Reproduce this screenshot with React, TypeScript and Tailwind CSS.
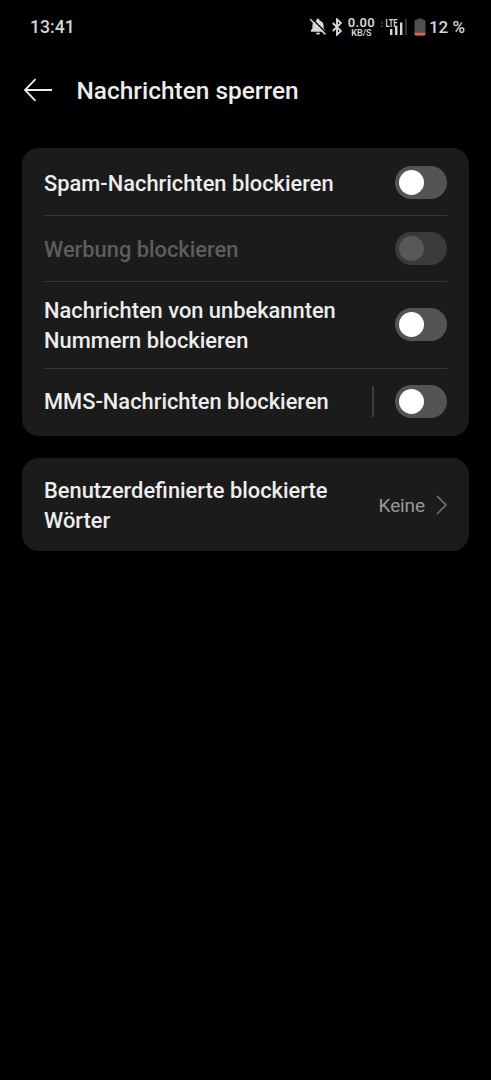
import { clsx } from 'clsx';

interface ToggleProps {
  label: string;
  disabled?: boolean;
}

function Toggle({ label, disabled = false }: ToggleProps) {
  return (
    <button
      role="switch"
      aria-checked={false}
      aria-label={label}
      disabled={disabled}
      className={clsx(
        'flex h-[33px] w-[52px] shrink-0 items-center rounded-full pl-[4px]',
        disabled ? 'bg-[#3b3b3b]' : 'bg-[#545454]'
      )}
    >
      <span className={clsx('size-[25px] rounded-full', disabled ? 'bg-[#585858]' : 'bg-white')} />
    </button>
  );
}

interface Setting {
  label: string;
  height: string;
  labelPadding: string;
  disabled?: boolean;
  hasDetails?: boolean;
}

const settings: Setting[] = [
  { label: 'Spam-Nachrichten blockieren', height: 'h-[66px]', labelPadding: 'pt-[3px]' },
  { label: 'Werbung blockieren', height: 'h-[66px]', labelPadding: 'pt-[2px]', disabled: true },
  {
    label: 'Nachrichten von unbekannten Nummern blockieren',
    height: 'h-[87px] pb-px',
    labelPadding: 'pt-[3px]',
  },
  { label: 'MMS-Nachrichten blockieren', height: 'h-[65px]', labelPadding: 'pt-px', hasDetails: true },
];

function StatusBar() {
  return (
    <div className="flex h-[54px] items-center justify-between pr-[26px] pl-[30px] text-[#d6d6d6]">
      <span className="text-[17.6px] leading-[22px] font-medium">13:41</span>
      <div className="flex items-center">
        {/* muted bell */}
        <svg width="18" height="18" viewBox="0 0 18 18" fill="none">
          <path
            d="M2 13.8V12L3.4 10.6V7.6C3.4 5 5 3.2 7.5 2.6V2a1.5 1.5 0 0 1 3 0v.6c2.5.6 4.1 2.4 4.1 5v3L16 12V13.8ZM7 14.8h4a2 2 0 0 1-4 0Z"
            fill="currentColor"
          />
          <path d="M2.4 .2L17.8 15.6" stroke="#000" strokeWidth="1.4" />
          <path d="M1.2 1.2L16.4 16.4" stroke="currentColor" strokeWidth="1.5" />
        </svg>
        {/* bluetooth */}
        <svg className="ml-[5px]" width="10" height="18" viewBox="0 0 10 18" fill="none">
          <path d="M.8 5L9 13L5 16.7V1.3L9 5L.8 13" stroke="currentColor" strokeWidth="1.9" />
        </svg>
        <div className="ml-[5px] flex w-[29px] flex-col items-center font-semibold">
          <span className="h-[10px] text-[13px] leading-[10px] tracking-[0.3px]">0.00</span>
          <span className="h-[9px] text-[9px] leading-[10px]">KB/S</span>
        </div>
        {/* mobile signal */}
        <svg className="ml-[4px]" width="28" height="20" viewBox="0 0 28 20">
          <path d="M0 6.5L2 4.2L4 6.5ZM0 8.5L2 10.8L4 8.5Z" fill="#3d3d3d" />
          <text
            x="5.5"
            y="9.5"
            fill="currentColor"
            fontSize="11"
            fontWeight="700"
            textLength="12"
            lengthAdjust="spacingAndGlyphs"
          >
            LTE
          </text>
          <path d="M10 12h2.4v6H10ZM15 10h2.4v8H15ZM20 5.5h2.4V18H20Z" fill="currentColor" />
          <path d="M25 2h2V18h-2Z" fill="#343434" />
        </svg>
        {/* battery */}
        <svg className="ml-[6px]" width="12" height="18" viewBox="0 0 12 18">
          <path
            d="M3.3 1.8V1.2A.8.8 0 0 1 4.1.5h3.8a.8.8 0 0 1 .8.7v.6h1.1A1.7 1.7 0 0 1 11.5 3.5v12.3a1.7 1.7 0 0 1-1.7 1.7H2.2A1.7 1.7 0 0 1 .5 15.8V3.5a1.7 1.7 0 0 1 1.7-1.7Z"
            fill="#505050"
          />
          <path d="M.5 14.7h11v1.1a1.7 1.7 0 0 1-1.7 1.7H2.2A1.7 1.7 0 0 1 .5 15.8Z" fill="#d76350" />
        </svg>
        <span className="ml-[3px] pt-px text-[17px] font-medium whitespace-nowrap">12 %</span>
      </div>
    </div>
  );
}

export default function App() {
  return (
    <div className="h-[1080px] w-[491px] overflow-hidden bg-black font-['Roboto',sans-serif] text-[#ededed]">
      <StatusBar />

      <header className="flex h-[72px] items-center pl-[23px]">
        <button aria-label="Zurück">
          <svg width="29" height="24" viewBox="0 0 29 24" fill="none" stroke="currentColor" strokeWidth="1.8">
            <path d="M12.5 1.2L2 12L12.5 22.8M2 12H29" />
          </svg>
        </button>
        <h1 className="ml-[24.5px] pt-[2px] text-[24.45px] font-medium">Nachrichten sperren</h1>
      </header>

      <main className="mt-[22px] flex flex-col gap-[22px] px-[22px] text-[21.85px] leading-[30px] font-medium">
        <section className="rounded-[17px] bg-[#1b1b1b] px-[22px] pt-[2px] pb-[2px]">
          {settings.map((setting, i) => (
            <div
              key={setting.label}
              className={clsx(
                'flex items-center justify-between',
                setting.height,
                i < settings.length - 1 && 'border-b border-[#363636]'
              )}
            >
              <span className={clsx('w-[310px]', setting.labelPadding, setting.disabled && 'text-[#5d5d5d]')}>
                {setting.label}
              </span>
              <div className="flex items-center">
                {setting.hasDetails && <span className="mr-[21px] h-[31px] w-[2px] bg-[#3c3c3c]" />}
                <Toggle label={setting.label} disabled={setting.disabled} />
              </div>
            </div>
          ))}
        </section>

        <section className="flex h-[93px] items-center justify-between rounded-[17px] bg-[#1b1b1b] px-[22px]">
          <span className="w-[300px] pt-[3px]">Benutzerdefinierte blockierte Wörter</span>
          <div className="flex items-center text-[#979797]">
            <span className="pt-[2px] text-[19px] font-normal tracking-[-0.1px]">Keine</span>
            <svg className="ml-[11px]" width="11" height="20" viewBox="0 0 11 20" fill="none">
              <path d="M1 1L10 10L1 19" stroke="#777" strokeWidth="1.5" />
            </svg>
          </div>
        </section>
      </main>
    </div>
  );
}
